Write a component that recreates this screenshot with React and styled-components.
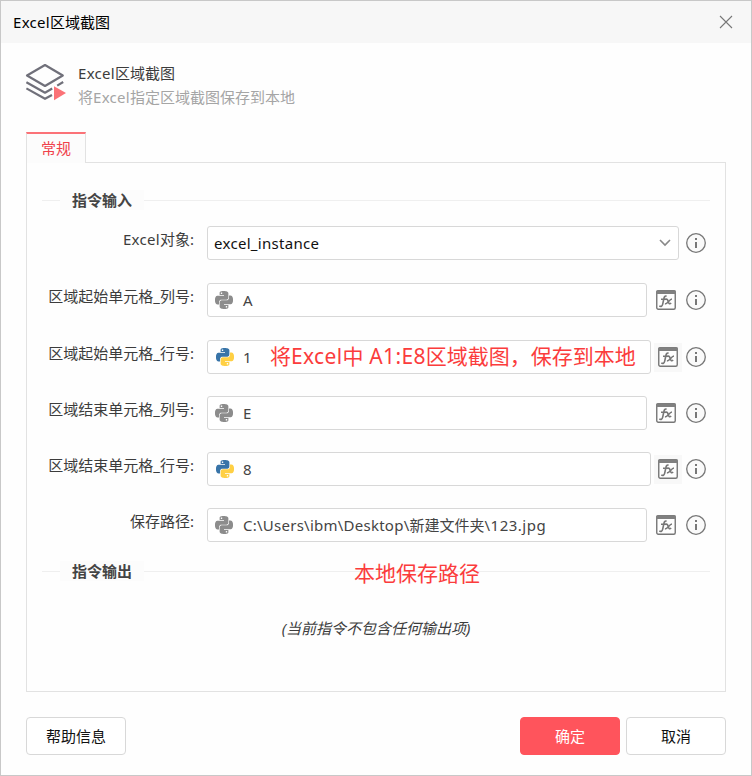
import React from "react";
import styled, { createGlobalStyle } from "styled-components";

const GlobalStyle = createGlobalStyle`
  * { box-sizing: border-box; }
  body {
    margin: 0;
    background: #fff;
    color: #3c3c3c;
    font: 15px/20px "Noto Sans", "Noto Sans CJK SC", sans-serif;
  }
`;

const Dialog = styled.main`
  width: 752px;
  height: 776px;
  border: 1px solid #c8c8c8;
  background: #fefefe;
  display: flex;
  flex-direction: column;
`;

const TitleBar = styled.header`
  height: 42px;
  flex: none;
  padding: 0 18px 0 12px;
  display: flex;
  align-items: center;
  justify-content: space-between;
  background: #f7f7f7;
  color: #000;
`;

const Latin = styled.span`
  letter-spacing: ${(p) => p.$spacing || "0.3px"};
`;

const CloseButton = styled.button`
  width: 14px;
  height: 14px;
  padding: 0;
  border: 0;
  background: none;
  display: flex;
`;

const Summary = styled.section`
  height: 89px;
  flex: none;
  padding: 20px 0 0 24px;
  display: flex;
  gap: 12px;
`;

const SummaryText = styled.div`
  display: flex;
  flex-direction: column;
  gap: 4px;
`;

const Heading = styled.div`
  color: #3c3c3c;
`;

const Description = styled.div`
  color: #a5a5a5;
`;

const Tabs = styled.nav`
  height: 31px;
  flex: none;
  margin: 0 25px -1px;
  display: flex;
  position: relative;
`;

const Tab = styled.div`
  width: 60px;
  border: 1px solid #e2e2e2;
  border-top: 2px solid #fb7277;
  border-bottom: 0;
  background: #fcfcfc;
  color: #f0414b;
  text-align: center;
  line-height: 28px;
`;

const Panel = styled.section`
  height: 530px;
  flex: none;
  margin: 0 25px;
  padding: 27px 15px 0;
  border: 1px solid #e2e2e2;
`;

const GroupTitle = styled.h2`
  height: 20px;
  margin: 0;
  display: flex;
  align-items: center;
  font-size: 15px;
  font-weight: 700;
  color: #444;

  &::before, &::after {
    content: "";
    height: 1px;
    background: #efefef;
  }
  &::before { width: 18px; }
  &::after { flex: 1; }
`;

const GroupName = styled.span`
  width: 84px;
  height: 20px;
  background: #fcfcfc;
  text-align: center;
  line-height: 20px;
`;

const Form = styled.div`
  height: 345px;
  padding-top: 16px;
  margin-bottom: 6px;
`;

const Row = styled.div`
  height: ${(p) => (p.$tall ? 57 : 56)}px;
  display: grid;
  grid-template-columns: 152px 472px 20px;
  column-gap: 13px;
  align-items: start;
`;

const RowLabel = styled.label`
  height: 26px;
  line-height: 26px;
  text-align: right;
  white-space: nowrap;
`;

const Controls = styled.div`
  width: 500px;
  height: 34px;
  display: flex;
  align-items: center;
`;

const Field = styled.div`
  width: ${(p) => p.$width}px;
  height: 34px;
  padding: 0 7px 0 ${(p) => p.$inset}px;
  border: 1px solid #d8d8d8;
  border-radius: 3px;
  background: #fff;
  display: flex;
  align-items: center;
  gap: ${(p) => p.$gap}px;
  color: ${(p) => (p.$dark ? "#111" : "#444")};
`;

const FieldValue = styled.span`
  flex: 1;
  white-space: pre;
`;

const FormulaButton = styled.span`
  width: ${(p) => (p.$active ? 28 : 20)}px;
  height: 29px;
  margin: 0 ${(p) => (p.$active ? "4px 0 3px" : "10px 0 9px")};
  background: ${(p) => (p.$active ? "#f8f8f8" : "none")};
  display: flex;
  align-items: center;
  justify-content: center;
`;

const InfoSlot = styled.span`
  display: flex;
  margin-left: ${(p) => p.$offset || 0}px;
`;

const EmptyNote = styled.p`
  margin: 37px 0 0;
  text-align: center;
  font-style: italic;
`;

const Footer = styled.footer`
  padding: 25px 25px 0;
  display: flex;
  gap: 6px;
`;

const Button = styled.button`
  width: 100px;
  height: 38px;
  padding: 0;
  border: 1px solid ${(p) => (p.$primary ? "#ff545c" : "#d8d8d8")};
  border-radius: 4px;
  background: ${(p) => (p.$primary ? "#ff545c" : "#fff")};
  color: ${(p) => (p.$primary ? "#fff" : "#111")};
  font: inherit;
  margin-right: ${(p) => (p.$pushNext ? "auto" : 0)};
`;

const Annotation = styled.div`
  position: absolute;
  left: ${(p) => p.$x}px;
  top: ${(p) => p.$y}px;
  color: #fb3c3c;
  font-size: 21px;
  line-height: 28px;
  white-space: pre;
`;

const snakePath =
  "M14.25.18l.9.2.73.26.59.3.45.32.34.34.25.34.16.33.1.3.04.26.02.2-.01.13V8.5l-.05.63-.13.55-.21.46-.26.38-.3.31-.33.25-.35.19-.35.14-.33.1-.3.07-.26.04-.21.02H8.77l-.69.05-.59.14-.5.22-.41.27-.33.32-.27.35-.2.36-.15.37-.1.35-.07.32-.04.27-.02.21v3.06H3.17l-.21-.03-.28-.07-.32-.12-.35-.18-.36-.26-.36-.36-.35-.46-.32-.59-.28-.73-.21-.88-.14-1.05-.05-1.23.06-1.22.16-1.04.24-.87.32-.71.36-.57.4-.44.42-.33.42-.24.4-.16.36-.1.32-.05.24-.01h.16l.06.01h8.16v-.83H6.18l-.01-2.75-.02-.37.05-.34.11-.31.17-.28.25-.26.31-.23.38-.2.44-.18.51-.15.58-.12.64-.1.71-.06.77-.04.84-.02 1.27.05zm-6.3 1.98l-.23.33-.08.41.08.41.23.34.33.22.41.09.41-.09.33-.22.23-.34.08-.41-.08-.41-.23-.33-.33-.22-.41-.09-.41.09z";

function PythonIcon({ colored }) {
  return (
    <svg width="18" height="18" viewBox="0 0 24 24">
      <path d={snakePath} fill={colored ? "#3874a8" : "#8c8c8c"} />
      <path d={snakePath} transform="rotate(180 12 12)" fill={colored ? "#ffd044" : "#8c8c8c"} />
    </svg>
  );
}

function FormulaIcon() {
  return (
    <svg width="20" height="20" viewBox="0 0 20 20" fill="none" stroke="#777">
      <rect x=".75" y=".75" width="18.5" height="18.5" rx="1.5" strokeWidth="1.4" fill="#fefefe" />
      <path d="M.2 4V1.5Q.2.2 1.5.2H18.5Q19.8.2 19.8 1.5V4Z" fill="#808080" stroke="none" />
      <path d="M10.6 6.2C8.8 5.6 8.2 7 7.8 9L6.7 14.2C6.3 16.2 5 16.9 3.3 16M5 9.2H10.2" strokeWidth="1.6" />
      <path d="M9.4 9.6C11 8.4 11.6 9.4 12.1 11.2S13.2 14.6 15.2 13.1M16 9C13.5 9 11.6 14 8.9 14" strokeWidth="1.6" />
    </svg>
  );
}

function InfoIcon() {
  return (
    <svg width="20" height="20" viewBox="0 0 20 20">
      <circle cx="10" cy="10" r="9.3" fill="#fafafa" stroke="#777" strokeWidth="1.3" />
      <path d="M9 5h2v2H9zM9 9h2v6H9z" fill="#777" />
    </svg>
  );
}

function LayersIcon() {
  return (
    <svg width="41" height="40" viewBox="0 0 41 40" fill="none">
      <g stroke="#70707a" strokeWidth="2.2" strokeLinejoin="round">
        <path d="M20 2L37.8 12.5L20 23L2 12.5Z" />
        <path d="M1.4 19.2L20 29.7L27.2 25.5M32.2 22.6L38.2 19" />
        <path d="M1.4 25.4L20 35.8L27 32" />
      </g>
      <path d="M29 23.3L41 30L29 37.3Z" fill="#fb7277" />
    </svg>
  );
}

const fields = [
  { label: "区域起始单元格_列号:", value: "A", tall: true },
  { label: "区域起始单元格_行号:", value: "1", python: true },
  { label: "区域结束单元格_列号:", value: "E" },
  { label: "区域结束单元格_行号:", value: "8", python: true },
  {
    label: "保存路径:",
    value: (
      <>
        <Latin $spacing="0.25px">{"C:\\Users\\ibm\\Desktop\\"}</Latin>
        新建文件夹
        <Latin $spacing="0.5px">{"\\123.jpg"}</Latin>
      </>
    ),
  },
];

function ExpressionRow({ label, value, python, tall }) {
  return (
    <Row $tall={tall}>
      <RowLabel>{label}</RowLabel>
      <Controls>
        <Field $width={python ? 444 : 440} $inset={python ? 8 : 7} $gap={python ? 9 : 10}>
          <PythonIcon colored={python} />
          <FieldValue>{value}</FieldValue>
        </Field>
        <FormulaButton $active={python}>
          <FormulaIcon />
        </FormulaButton>
        <InfoIcon />
      </Controls>
    </Row>
  );
}

export default function App() {
  return (
    <>
      <GlobalStyle />
      <Dialog>
        <TitleBar>
          <span><Latin>Excel</Latin>区域截图</span>
          <CloseButton aria-label="关闭">
            <svg width="14" height="14" viewBox="0 0 14 14" stroke="#777" strokeWidth="1.1">
              <path d="M1 1L13 13M13 1L1 13" />
            </svg>
          </CloseButton>
        </TitleBar>
        <Summary>
          <LayersIcon />
          <SummaryText>
            <Heading><Latin>Excel</Latin>区域截图</Heading>
            <Description>将<Latin>Excel</Latin>指定区域截图保存到本地</Description>
          </SummaryText>
        </Summary>
        <Tabs><Tab>常规</Tab></Tabs>
        <Panel>
          <GroupTitle><GroupName>指令输入</GroupName></GroupTitle>
          <Form>
            <Row $tall>
              <RowLabel><Latin>Excel</Latin>对象:</RowLabel>
              <Controls>
                <Field $width={472} $inset={6} $gap={0} $dark>
                  <FieldValue><Latin>excel_instance</Latin></FieldValue>
                  <svg width="12" height="8" viewBox="0 0 12 8" fill="none" stroke="#888" strokeWidth="1.6">
                    <path d="M1 1L6 6L11 1" />
                  </svg>
                </Field>
                <InfoSlot $offset={7}><InfoIcon /></InfoSlot>
              </Controls>
            </Row>
            {fields.map((f) => <ExpressionRow key={f.label} {...f} />)}
          </Form>
          <GroupTitle><GroupName>指令输出</GroupName></GroupTitle>
          <EmptyNote>(当前指令不包含任何输出项)</EmptyNote>
        </Panel>
        <Footer>
          <Button $pushNext>帮助信息</Button>
          <Button $primary>确定</Button>
          <Button>取消</Button>
        </Footer>
      </Dialog>
      <Annotation $x={270} $y={342}>
        将<Latin $spacing="0.35px">Excel</Latin>中<Latin $spacing="0.35px"> A1:E8</Latin>区域截图，保存到本地
      </Annotation>
      <Annotation $x={354} $y={559}>本地保存路径</Annotation>
    </>
  );
}
